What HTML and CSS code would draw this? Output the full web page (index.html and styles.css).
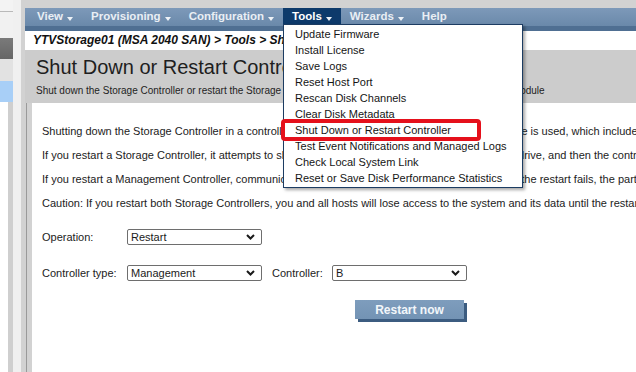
FILE: index.html
```html
<!DOCTYPE html>
<html lang="en">
<head>
  <meta charset="UTF-8">
  <title>Shut Down or Restart Controller</title>
  <link rel="stylesheet" href="styles.css">
</head>
<body>
  <div class="sidebar">
    <div class="sb-top"></div>
    <div class="sb-row"></div>
    <div class="sb-dark"></div>
    <div class="sb-light"></div>
    <div class="sb-blue"></div>
    <div class="sb-rest"></div>
  </div>
  <div class="gutter"></div>

  <div class="main">
    <ul class="nav">
      <li>View<span class="caret"></span></li>
      <li>Provisioning<span class="caret"></span></li>
      <li>Configuration<span class="caret"></span></li>
      <li class="active">Tools<span class="caret"></span>
        <ul class="menu">
          <li>Update Firmware</li>
          <li>Install License</li>
          <li>Save Logs</li>
          <li>Reset Host Port</li>
          <li>Rescan Disk Channels</li>
          <li>Clear Disk Metadata</li>
          <li>Shut Down or Restart Controller</li>
          <li>Test Event Notifications and Managed Logs</li>
          <li>Check Local System Link</li>
          <li>Reset or Save Disk Performance Statistics</li>
          <li class="callout"></li>
        </ul>
      </li>
      <li>Wizards<span class="caret"></span></li>
      <li>Help</li>
    </ul>
    <div class="nav-rule"></div>

    <div class="crumb">YTVStorage01 (MSA 2040 SAN) &gt; Tools &gt; Shut Down or Restart Controller</div>

    <div class="head">
      <h1>Shut Down or Restart Controller</h1>
      <p>Shut down the Storage Controller or restart the Storage Controller or Management Controller in a controller module</p>
    </div>

    <div class="body">
      <div class="panel">
        <p>Shutting down the Storage Controller in a controller module ensures that a proper failover sequence is used, which includes stopping all I/O operations and writing any data in write cache to disk.</p>
        <p>If you restart a Storage Controller, it attempts to shut down properly, flush its caches onto the disk drive, and then the controller restarts.</p>
        <p>If you restart a Management Controller, communication with it is lost until it successfully restarts. If the restart fails, the partner Management Controller remains active.</p>
        <p>Caution: If you restart both Storage Controllers, you and all hosts will lose access to the system and its data until the restart is complete.</p>

        <form class="form">
          <div class="row">
            <label class="lbl">Operation:</label>
            <span class="pick">
              <select>
                <option>Restart</option>
                <option>Shut down</option>
              </select>
              <svg class="chev" width="9" height="6" viewBox="0 0 9 6"><polyline points="1,1 4.5,4.5 8,1" fill="none" stroke="#1a1a1a" stroke-width="2"/></svg>
            </span>
          </div>
          <div class="row">
            <label class="lbl">Controller type:</label>
            <span class="pick">
              <select>
                <option>Management</option>
                <option>Storage</option>
              </select>
              <svg class="chev" width="9" height="6" viewBox="0 0 9 6"><polyline points="1,1 4.5,4.5 8,1" fill="none" stroke="#1a1a1a" stroke-width="2"/></svg>
            </span>
            <label class="lbl lbl-ctrl">Controller:</label>
            <span class="pick">
              <select>
                <option>B</option>
                <option>A</option>
              </select>
              <svg class="chev" width="9" height="6" viewBox="0 0 9 6"><polyline points="1,1 4.5,4.5 8,1" fill="none" stroke="#1a1a1a" stroke-width="2"/></svg>
            </span>
          </div>
          <button type="button" class="btn">Restart now</button>
        </form>
      </div>
    </div>
  </div>
</body>
</html>
```

FILE: styles.css
```css
* {
  box-sizing: border-box;
}

body {
  margin: 0;
  height: 372px;
  display: flex;
  overflow: hidden;
  font-family: 'Liberation Sans', Arial, sans-serif;
  background: #ffffff;
}

/* left frame */
.sidebar {
  width: 13px;
  display: flex;
  flex-direction: column;
}

.sb-top {
  height: 12px;
  background: #f3f3f3;
  border-bottom: 1px solid #b9b9b9;
}

.sb-row {
  height: 26px;
  background: #f1f1f1;
}

.sb-dark {
  height: 21px;
  background: linear-gradient(#7a7a7a, #666666);
}

.sb-light {
  height: 22px;
  background: #e2e2e2;
}

.sb-blue {
  height: 21px;
  background: #a8cff7;
}

.sb-rest {
  flex: 1;
  background: #ffffff;
  border-left: 8px solid #ffffff;
  border-right: 5px solid #cfcfcf;
}

.gutter {
  width: 8px;
  background: #f0f0f0;
}

.main {
  flex: 1;
  min-width: 0;
  display: flex;
  flex-direction: column;
  background: #d2d2d2;
  padding: 8px 0 0 4px;
}

/* top navigation */
.nav {
  list-style: none;
  margin: 0;
  padding: 0 0 0 3px;
  height: 18px;
  display: flex;
  background: linear-gradient(#7d99b9, #6a89aa);
}

.nav > li {
  position: relative;
  height: 16px;
  line-height: 16px;
  padding: 0 9px;
  font-size: 11.5px;
  font-weight: bold;
  color: #e9eef4;
  white-space: nowrap;
}

.nav > li.active {
  background: #0d3a6b;
  color: #ffffff;
}

.caret {
  display: inline-block;
  margin-left: 4px;
  vertical-align: -1px;
  border-left: 3px solid transparent;
  border-right: 3px solid transparent;
  border-top: 4px solid #eef2f7;
}

.nav-rule {
  height: 5px;
  background: #4f6f92;
}

/* tools dropdown */
.menu {
  position: absolute;
  top: 16px;
  left: 0;
  z-index: 5;
  width: 240px;
  margin: 0;
  padding: 1px 0;
  list-style: none;
  background: #ffffff;
  border: 1px solid #1c3c62;
  box-shadow: 2px 2px 3px rgba(0, 0, 0, 0.35);
}

.menu li {
  padding-left: 11px;
  line-height: 16px;
  font-size: 11px;
  font-weight: normal;
  color: #151515;
}

.menu li.callout {
  position: absolute;
  left: -3px;
  top: 94px;
  width: 200px;
  height: 22px;
  padding: 0;
  border: 4px solid #e5101b;
  border-radius: 4px;
}

/* breadcrumb + heading */
.crumb {
  height: 19px;
  line-height: 19px;
  padding-left: 8px;
  background: #ffffff;
  font-size: 12px;
  font-weight: bold;
  font-style: italic;
  color: #111111;
  white-space: nowrap;
  overflow: hidden;
}

.head {
  height: 53px;
  padding: 5px 0 0 11px;
  background: #cccccc;
  white-space: nowrap;
  overflow: hidden;
}

.head h1 {
  margin: 0;
  font-size: 20px;
  line-height: 24px;
  font-weight: normal;
  color: #1e1e1e;
}

.head p {
  margin: 6px 0 0;
  font-size: 10px;
  line-height: 12px;
  color: #1e1e1e;
}

/* content */
.body {
  flex: 1;
  display: flex;
  margin-left: 1px;
  padding-left: 5px;
  border-left: 1px solid #9a9a9a;
}

.panel {
  flex: 1;
  min-width: 0;
  overflow: hidden;
  background: #ffffff;
  padding: 21px 0 0 10px;
}

.panel p {
  margin: 0 0 10px;
  font-size: 11px;
  line-height: 14px;
  color: #222222;
  white-space: nowrap;
}

.form {
  padding-top: 9px;
}

.row {
  display: flex;
  align-items: center;
  height: 16px;
  margin-bottom: 20px;
}

.lbl {
  width: 85px;
  font-size: 11px;
  color: #222222;
}

.lbl-ctrl {
  width: 60px;
  margin-left: 10px;
}

.pick {
  position: relative;
  display: inline-block;
}

.pick select {
  appearance: none;
  -webkit-appearance: none;
  display: block;
  width: 135px;
  height: 16px;
  margin: 0;
  padding: 0 0 0 3px;
  border: 1px solid #6e6e6e;
  border-radius: 2px;
  background: #ffffff;
  font-family: 'Liberation Sans', Arial, sans-serif;
  font-size: 11px;
  line-height: 14px;
  color: #1a1a1a;
}

.chev {
  position: absolute;
  right: 7px;
  top: 5px;
  pointer-events: none;
}

.btn {
  display: block;
  width: 109px;
  height: 19px;
  margin-left: 313px;
  margin-top: -1px;
  padding: 0;
  border: none;
  background: linear-gradient(#7e9dbd, #7393b4);
  box-shadow: 3px 3px 0 #3c5c80;
  font-family: 'Liberation Sans', Arial, sans-serif;
  font-size: 12px;
  font-weight: bold;
  color: #f2f6fa;
  cursor: pointer;
}
```
